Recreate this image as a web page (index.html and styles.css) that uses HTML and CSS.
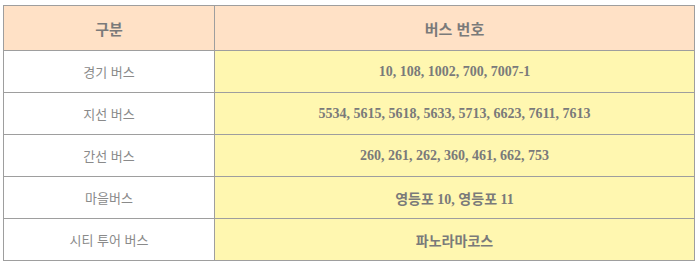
FILE: index.html
```html
<!DOCTYPE html>
<html lang="ko">
<head>
<meta charset="utf-8">
<link rel="stylesheet" href="styles.css">
</head>
<body>
<table class="bus">
  <thead>
    <tr><th class="c1">구분</th><th class="c2">버스 번호</th></tr>
  </thead>
  <tbody>
    <tr><td class="kind">경기 버스</td><td class="nums">10, 108, 1002, 700, 7007-1</td></tr>
    <tr><td class="kind">지선 버스</td><td class="nums">5534, 5615, 5618, 5633, 5713, 6623, 7611, 7613</td></tr>
    <tr><td class="kind">간선 버스</td><td class="nums">260, 261, 262, 360, 461, 662, 753</td></tr>
    <tr><td class="kind">마을버스</td><td class="nums">영등포 10, 영등포 11</td></tr>
    <tr><td class="kind">시티 투어 버스</td><td class="nums">파노라마코스</td></tr>
  </tbody>
</table>
</body>
</html>
```
FILE: styles.css
```css
html, body { margin: 0; padding: 0; background: #ffffff; }
body { padding: 5px 0 0 3px; }
.bus {
  border-collapse: collapse;
  width: 692px;
  table-layout: fixed;
}
.bus th, .bus td {
  border: 1px solid #9e9e9e;
  text-align: center;
  vertical-align: middle;
  padding: 0;
}
.bus th {
  background: #ffe1c6;
  height: 44px;
  font-family: "Noto Sans CJK KR", sans-serif;
  font-weight: 700;
  font-size: 15px;
  color: #7a7a7a;
}
.c1 { width: 210px; }
.bus td { height: 41px; }
.kind {
  background: #ffffff;
  font-family: "Noto Sans CJK KR", sans-serif;
  font-size: 13px;
  color: #8a8a8a;
}
.nums {
  background: #fff7b0;
  font-family: "Liberation Serif", "Noto Sans CJK KR", serif;
  font-weight: 700;
  font-size: 14px;
  color: #7a7a7a;
}
```
